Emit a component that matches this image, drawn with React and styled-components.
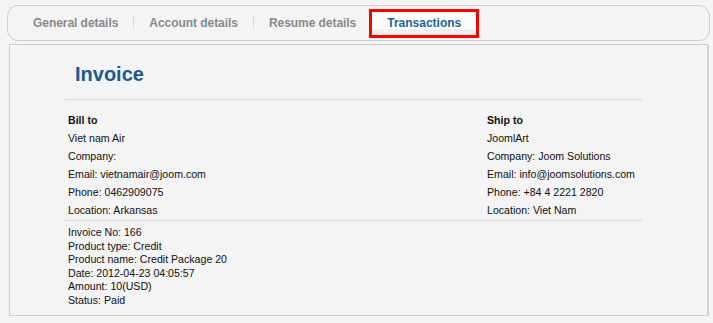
import React from 'react'
import styled, { createGlobalStyle } from 'styled-components'

const GlobalStyle = createGlobalStyle`
  html, body {
    margin: 0;
    padding: 0;
    background: #f4f4f4;
    font-family: "Liberation Sans", Arial, sans-serif;
  }
`

const Page = styled.div`
  padding-top: 5px;
  width: 713px;
`

const TabBar = styled.div`
  box-sizing: border-box;
  margin-left: 7px;
  width: 703px;
  height: 36px;
  border: 1px solid #cfcfcf;
  border-radius: 11px;
  display: flex;
  align-items: center;
  padding-left: 10px;
`

const Tab = styled.div`
  box-sizing: border-box;
  padding: 0 15px;
  font-size: 12px;
  letter-spacing: -0.05px;
  font-weight: bold;
  line-height: 14px;
  color: #8a8a8a;
  border-left: ${p => (p.$first ? 'none' : '1px solid #dcdcdc')};
  white-space: nowrap;
`

const ActiveTab = styled.div`
  box-sizing: border-box;
  height: 29px;
  margin-left: -2px;
  padding: 0 15px;
  border: 3px solid #ff0000;
  background: linear-gradient(#ffffff 0 76%, #f0f0f0 76%);
  display: flex;
  align-items: center;
  font-size: 12px;
  font-weight: bold;
  color: #1f5f9a;
  white-space: nowrap;
`

const Panel = styled.div`
  box-sizing: border-box;
  margin: 3px 0 0 9px;
  width: 699px;
  height: 272px;
  border: 1px solid #cdcdcd;
  box-shadow: 1px 1px 0 #d4d4d4;
  background: #f4f4f4;
  padding: 17px 0 0 55px;
`

const Inner = styled.div`
  width: 577px;
`

const Title = styled.h1`
  margin: 0 0 13px 10px;
  font-size: 20px;
  line-height: 24px;
  font-weight: bold;
  color: #1b5b8f;
`

const Rule = styled.div`
  height: 1px;
  background: #d8d8d8;
`

const Parties = styled.div`
  display: grid;
  grid-template-columns: 419px 1fr;
  padding: 11px 0 1px 3px;
`

const Line = styled.div`
  font-size: 10.6px;
  line-height: ${p => p.$lh || '18px'};
  font-weight: ${p => (p.$bold ? 'bold' : 'normal')};
  color: #111;
  white-space: nowrap;
`

const Details = styled.div`
  padding: 5px 0 0 3px;
`

const bill = [
  'Viet nam Air',
  'Company:',
  'Email: vietnamair@joom.com',
  'Phone: 0462909075',
  'Location: Arkansas',
]

const ship = [
  'JoomlArt',
  'Company: Joom Solutions',
  'Email: info@joomsolutions.com',
  'Phone: +84 4 2221 2820',
  'Location: Viet Nam',
]

const details = [
  'Invoice No: 166',
  'Product type: Credit',
  'Product name: Credit Package 20',
  'Date: 2012-04-23 04:05:57',
  'Amount: 10(USD)',
  'Status: Paid',
]

export default function App() {
  return (
    <Page>
      <GlobalStyle />
      <TabBar>
        <Tab $first>General details</Tab>
        <Tab>Account details</Tab>
        <Tab>Resume details</Tab>
        <ActiveTab>Transactions</ActiveTab>
      </TabBar>
      <Panel>
        <Inner>
          <Title>Invoice</Title>
          <Rule />
          <Parties>
            <div>
              <Line $bold>Bill to</Line>
              {bill.map(t => <Line key={t}>{t}</Line>)}
            </div>
            <div>
              <Line $bold>Ship to</Line>
              {ship.map(t => <Line key={t}>{t}</Line>)}
            </div>
          </Parties>
          <Rule />
          <Details>
            {details.map(t => <Line key={t} $lh="13.6px">{t}</Line>)}
          </Details>
        </Inner>
      </Panel>
    </Page>
  )
}
